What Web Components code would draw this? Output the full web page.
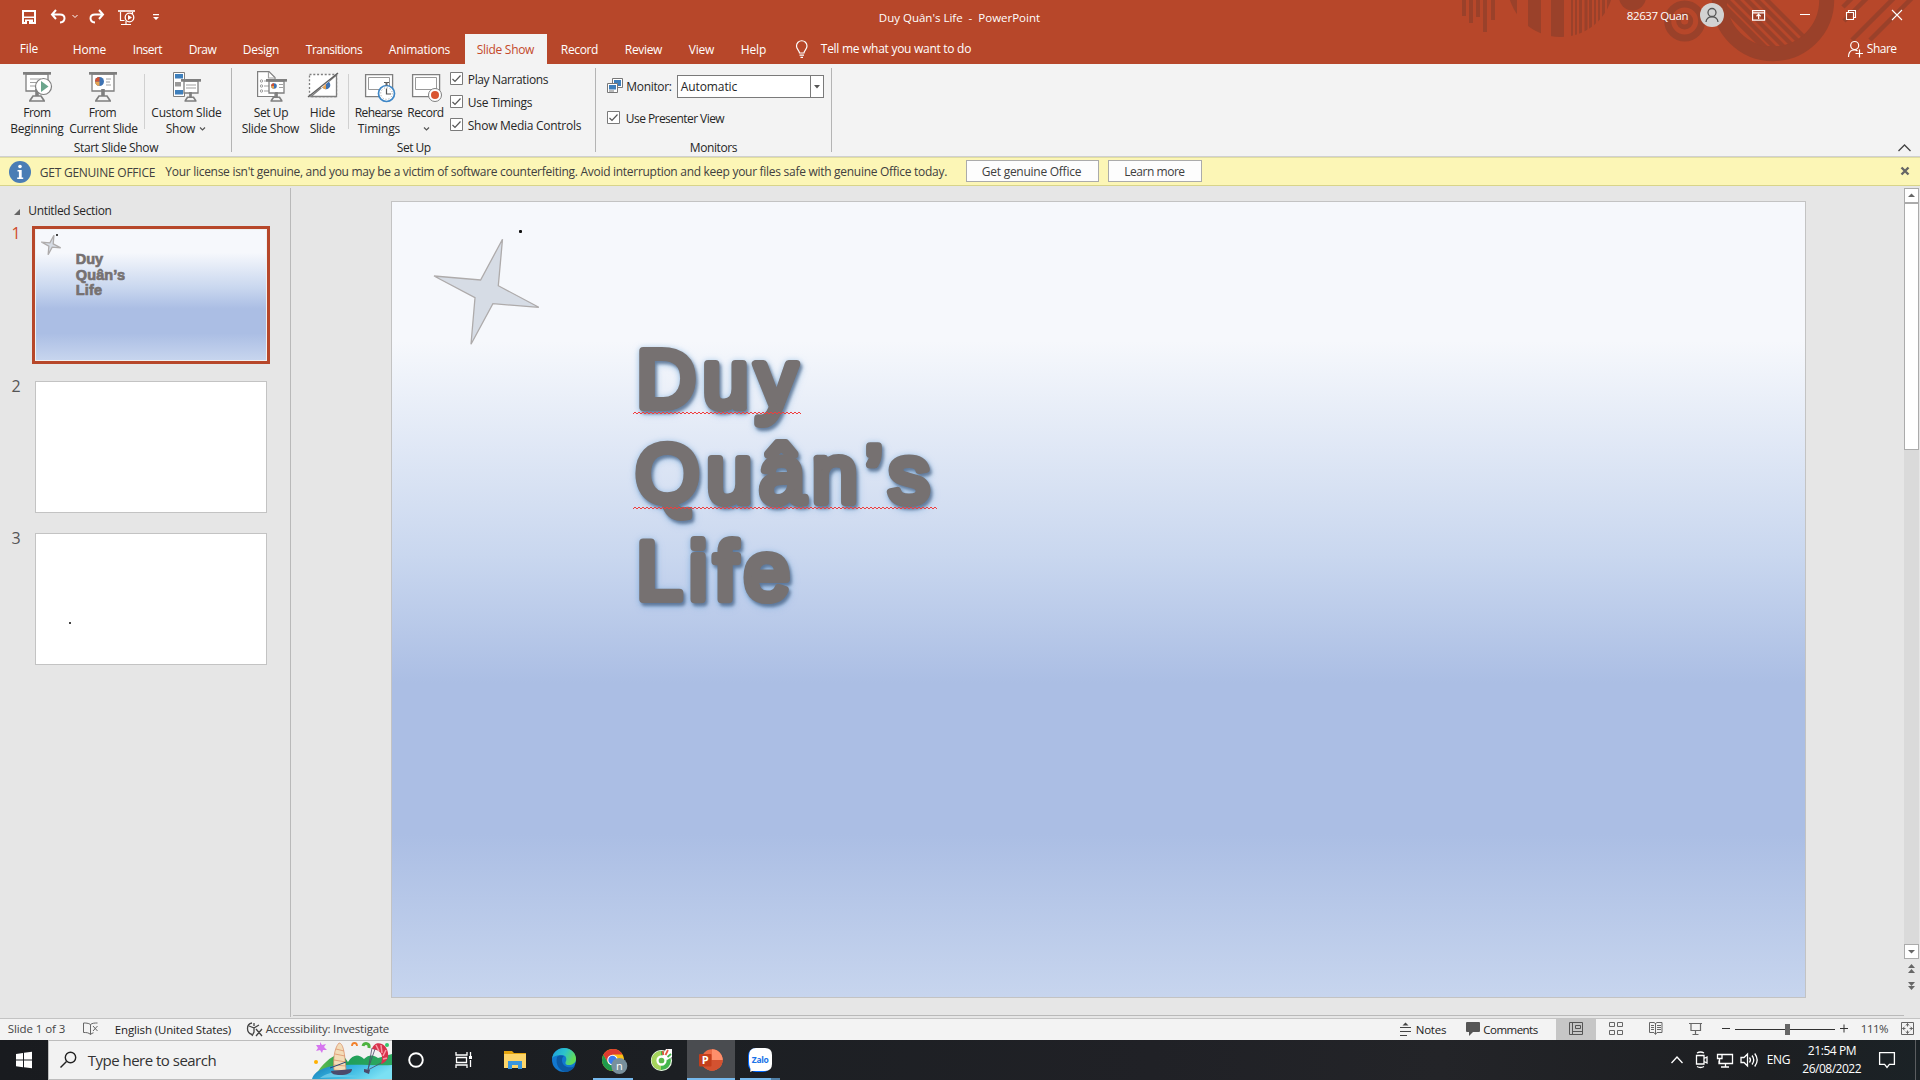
<!DOCTYPE html>
<html lang="en">
<head>
<meta charset="utf-8">
<title>Duy Quân's Life - PowerPoint</title>
<style>
html,body{margin:0;padding:0;overflow:hidden;background:#e6e6e6}
body{width:1920px;height:1080px;font-family:"Open Sans","Noto Sans",sans-serif;font-size:12px;color:#262626}
</style>
</head>
<body>
<ppt-app></ppt-app>
<script>
// Layout helpers: a row is a flex line whose children carry their gap from the previous child.
const icon = (x, y, w, h, body) => ({ x, y, w, html: `<svg width="${w}" height="${h}" viewBox="${x} ${y} ${w} ${h}">${body}</svg>` });
const text = (x, w, cy, str, size = 12, extra = '') => ({ x, y: cy - 10, w, html: `<ui-text w="${w}" style="font-size:${size}px;line-height:20px;${extra}">${str}</ui-text>` });
const row = (left, top, items) => {
  let end = left, out = '';
  for (const i of items) {
    out += `<div class="cell" style="margin:${i.y - top}px 0 0 ${i.x - end}px;width:${i.w}px">${i.html}</div>`;
    end = i.x + i.w;
  }
  return `<div class="row">${out}</div>`;
};
const BASE = `*{box-sizing:border-box}.row{display:flex;align-items:flex-start}.cell{flex:none;line-height:0}svg{display:block;overflow:visible}`;
const define = (name, css, html) => customElements.define(name, class extends HTMLElement {
  constructor() {
    super();
    this.attachShadow({ mode: 'open' }).innerHTML = `<style>${BASE}${css}</style>${html}`;
  }
});

customElements.define('ui-text', class extends HTMLElement {
  constructor() {
    super();
    this.attachShadow({ mode: 'open' }).innerHTML = `<style>:host{display:block;white-space:pre}span{display:inline-block;margin-left:-.2px}</style><span><slot></slot></span>`;
  }
  connectedCallback() {
    const w = +this.getAttribute('w'), s = this.shadowRoot.querySelector('span');
    if (!w) return;
    this.style.width = w + 'px';
    const n = [...this.textContent].length;
    s.style.letterSpacing = ((w + .3 - s.getBoundingClientRect().width) / Math.max(1, n)).toFixed(3) + 'px';
  }
});

/* ---------- title bar ---------- */
const D = '#9a412a';
const bars = [[1462,4,16],[1469,4,23],[1476,4,17],[1483,4,32],[1491,4,20]].map(b => `<rect x="${b[0]}" y="0" width="${b[1]}" height="${b[2]}"/>`).join('');
const stripes = [[1508,9],[1528,13],[1551,13],[1571,2],[1575,2],[1579,3],[1584.5,3],[1589,3],[1594,2],[1598,2],[1602,3],[1607,4]].map(b => `<rect x="${b[0]}" y="0" width="${b[1]}" height="40"/>`).join('');
const diag = [0,1,2,3,4,5].map(i => `<path d="M${1703 + i * 10} -14l80 80" stroke-width="${i < 1 ? 6 : 4.2}"/>`).join('');
const decor = `<svg class="decor" width="480" height="64" viewBox="1440 0 480 64">
<defs><clipPath id="a"><circle cx="1560.5" cy="-16" r="53"/></clipPath><clipPath id="b"><circle cx="1773" cy="0" r="47"/></clipPath></defs>
<g fill="${D}">${bars}<g clip-path="url(#a)">${stripes}</g><circle cx="1632.5" cy="-3" r="13.5"/><circle cx="1684.7" cy="21" r="8.5"/></g>
<g fill="none" stroke="${D}"><circle cx="1684.7" cy="21" r="17" stroke-width="7"/><circle cx="1773" cy="0" r="53.7" stroke-width="15"/>
<g clip-path="url(#b)">${diag}</g><path stroke-width="4.5" d="M1843 7l9-9M1844 21l24-24M1852 40l43-43M1870 40l43-43"/></g><circle cx="1684.7" cy="21" r="3.6" fill="#b7472a"/></svg>`;

define('app-titlebar', `:host{display:block;position:relative;height:34px;color:#fff}.decor{position:absolute;right:0;top:0}.row{position:relative}`,
decor + row(0, 0, [
  icon(22, 10, 14, 14, `<path fill="none" stroke="#fff" stroke-width="2" d="M23 11h12v12H23z"/><path fill="#fff" d="M23 16.5h12v1.5H23zM25 19.5h8V24h-8z"/><path fill="#b7472a" d="M27 21h2v3h-2z"/>`),
  icon(51, 9, 15, 15, `<path fill="none" stroke="#fff" stroke-width="2" d="M56 10l-4 4.500 4 4.500M52.500 14.500h7.500c6 0 6 7.500 0 8"/>`),
  icon(72, 14, 6, 4, `<path fill="none" stroke="#fff" d="M72.500 15l2.500 2.500L77.500 15"/>`),
  icon(89, 9, 15, 15, `<path fill="none" stroke="#fff" stroke-width="2" d="M99 10l4 4.500-4 4.500M102.500 14.500H95c-6 0-6 7.500 0 8"/>`),
  icon(118, 10, 17, 15, `<g fill="none" stroke="#fff"><path stroke-width="1.600" d="M118 11h17"/><path d="M120.500 12v8.500h4M132.500 12v2M126 21v3M121 24.500h10" stroke-width="1.200"/><circle cx="129.500" cy="17.500" r="4.300" stroke-width="1.300"/></g><path fill="#fff" d="M128 15l4 2.500-4 2.500z"/>`),
  icon(152, 14, 7, 7, `<path fill="#fff" d="M153 14h6v1.300h-6zM153 17h6l-3 3z"/>`),
  text(879, 161, 18, "Duy Quân's Life  -  PowerPoint", 11.5),
  text(1627, 61, 16, '82637 Quan', 11.5),
  icon(1700, 3, 24, 24, `<circle cx="1712" cy="15" r="12" fill="#d2d2d2"/><g fill="none" stroke="#555" stroke-width="1.300"><circle cx="1712" cy="12.500" r="4"/><path d="M1706 22c.5-7 11.500-7 12 0"/></g>`),
  icon(1752, 9, 13, 12, `<path fill="none" stroke="#fff" stroke-width="1.200" d="M1752.600 10.600h12v9.500h-12zM1752.600 12.800h12M1758.600 19v-4.500M1756.500 16.300l2.100-2 2.100 2"/>`),
  icon(1800, 9, 10, 12, `<path stroke="#fff" d="M1800 14.500h10"/>`),
  icon(1846, 9, 11, 12, `<path fill="none" stroke="#fff" stroke-width="1.100" d="M1846.500 12.500h7v7h-7zM1848.500 12v-1.500h7v7H1854"/>`),
  icon(1892, 9, 11, 12, `<path stroke="#fff" stroke-width="1.100" d="M1892 10l10 10M1902 10l-10 10"/>`)
]));

/* ---------- ribbon tabs ---------- */
define('ribbon-tabs', `:host{display:block;position:relative;height:30px;color:#fff}.active{background:#f3f3f3;height:30px;color:#c4492b;padding:6px 0 0 12px}`,
row(0, 34, [
  text(20, 18, 49, 'File'), text(73, 33, 50, 'Home'), text(133, 29, 50, 'Insert'), text(189, 27, 50, 'Draw'), text(243, 36, 50, 'Design'),
  text(306, 56, 50, 'Transitions'), text(389, 61, 50, 'Animations'),
  { x: 465, y: 34, w: 82, html: '<div class="active"><ui-text w="57" style="line-height:20px">Slide Show</ui-text></div>' },
  text(561, 37, 50, 'Record'), text(625, 37, 50, 'Review'), text(689, 25, 50, 'View'), text(741, 25, 50, 'Help'),
  icon(796, 41, 12, 17, `<path fill="none" stroke="#fff" stroke-width="1.200" d="M799.500 53c0-2.500-3-3.500-3-7a5 5 0 0 1 10.500 0c0 3.500-3 4.500-3 7zM799.500 55.200h4.500M800.500 57.300h2.500"/>`),
  text(821, 150, 49, 'Tell me what you want to do'),
  icon(1848, 41, 15, 16, `<g fill="none" stroke="#fff" stroke-width="1.200"><circle cx="1854.700" cy="45.500" r="4"/><path d="M1848.500 57c0-8 7-8 9-6M1859.500 49.500v8M1855.500 53.500h7.500"/></g>`),
  text(1867, 29.5, 49, 'Share')
]));

/* ---------- ribbon ---------- */
const G = '#7f7f7f';
const board = (x, y, w, h) => `<path fill="#fff" stroke="${G}" stroke-width="1.300" d="M${x + 3} ${y + 2}h${w - 6}v${h}h-${w - 6}z"/><path fill="${G}" d="M${x} ${y}h${w}v2.700H${x}z"/>`;
const stand = (cx, y, k = 1) => `<path fill="${G}" d="M${cx - 1.8 * k} ${y}h${3.6 * k}v${7 * k}h-${3.6 * k}z"/><path fill="none" stroke="${G}" stroke-width="1.700" d="M${cx - 7 * k} ${y + 11.5 * k}l${3 * k} -${4.5 * k}h${8 * k}l${3 * k} ${4.5 * k}M${cx - 8 * k} ${y + 12 * k}h${16 * k}"/>`;
const pie = (cx, cy, r) => `<circle cx="${cx}" cy="${cy}" r="${r}" fill="#3e73b3"/><path fill="#e8a34f" d="M${cx} ${cy}v${r}a${r} ${r} 0 0 1-${r}-${r}z"/><path fill="#d35230" d="M${cx} ${cy}h-${r}a${r} ${r} 0 0 1 ${r}-${r}z"/>`;
const L = (d) => `<path fill="none" stroke="#a0a0a0" stroke-width="1.200" d="${d}"/>`;
const chev = (x, y) => `<path fill="none" stroke="#555" stroke-width="1.200" d="M${x} ${y}l2.500 2.500 2.500-2.500"/>`;
const check = (x, y) => icon(x, y, 13, 13, `<path fill="#fff" stroke="#7a7a7a" d="M${x + .5} ${y + .5}h12v12h-12z"/><path fill="none" stroke="#555" stroke-width="1.200" d="M${x + 2.5} ${y + 7}l2.500 2.500 5.500-6"/>`);
const ICO = {
  begin: [23, `${board(23,72,28,17)}${L('M30 79h11M30 82.500h6M30 86h6')}${stand(37,89)}<circle cx="43.500" cy="86.500" r="8" fill="#fff" stroke="${G}" stroke-width="1.200"/><path fill="#6ba58c" d="M41 81l7.500 5.500L41 92z"/>`],
  current: [89, `${board(89,72,28,17)}${pie(99.5,81.5,4.5)}${L('M106 79h5M106 82h4M106 85h5')}${stand(103,89)}`],
  custom: [172, `<path fill="#fff" stroke="${G}" d="M173.500 72.500h11v24h-11z"/><path fill="#3e7fbc" d="M175 74h8v4.500h-8zM175 90h8v4.500h-8z"/><path fill="#999" d="M175 82h6v4.500h-6z"/>${board(181,79,20,12)}${L('M186 85h10M186 88h10')}${stand(190.5,92,.75)}`],
  setup: [257, `<path fill="#fff" stroke="${G}" stroke-width="1.200" d="M257.600 71.600h11.400l6 6V96.500h-17.400z"/>${L('M268.500 72v6h6M264 81h5M264 86h5M264 91h5')}<g fill="none" stroke="#999"><circle cx="261.500" cy="81" r="1.200"/><circle cx="261.500" cy="86" r="1.200"/><circle cx="261.500" cy="91" r="1.200"/></g>${board(266,79,21,12)}${pie(274,86,2.8)}${L('M279 84.500h4M279 87.500h4')}${stand(276.5,92,.75)}`],
  hide: [308, `<path fill="#fff" stroke="${G}" stroke-width="1.300" stroke-dasharray="2 1.800" d="M309.500 74.500h27v22h-27z"/><path fill="#fff" stroke="${G}" stroke-width="1.300" d="M311 96.500L336.500 75v21.500z"/>${pie(326,85,4.3)}<path fill="#fff" d="M319 79h7.500l3.500 1.500-9 8z"/><path stroke="#606060" stroke-width="1.500" d="M308 97l30-24"/>`],
  rehearse: [365, `<path fill="#fff" stroke="${G}" stroke-width="1.300" d="M365.600 74.600h27v22h-27z"/><path fill="none" stroke="#999" d="M368.500 77.500h21v12h-21z"/><circle cx="386.500" cy="93.500" r="8" fill="#fff" stroke="#3e86c6" stroke-width="1.700"/><circle cx="386.500" cy="93.500" r="5.800" fill="none" stroke="#888" stroke-dasharray=".8 2.200"/><path fill="none" stroke="#555" stroke-width="1.200" d="M386.500 88.500v5.500h4.500M384 82.500h5"/><path fill="#666" d="M385.500 82h2v3.500h-2z"/>`],
  record: [412, `<path fill="#fff" stroke="${G}" stroke-width="1.300" d="M412.600 74.600h27v22h-27z"/><path fill="none" stroke="#999" d="M415.500 77.500h21v12h-21z"/><circle cx="435" cy="95" r="6.500" fill="#fff" stroke="${G}"/><circle cx="435" cy="95" r="4" fill="#d9542f"/>`]
};
const big = (x, w, key, w1, l1, w2, l2, chevX) => ({ x, y: 70, w, html:
  row(x, 70, [icon(ICO[key][0], 70, 31, 33, ICO[key][1])]) +
  row(x, 103, [text(w1[0], w1[1], 113.4, l1)]) +
  `<div style="margin-top:-4px">` + row(x, 119, [...(l2 ? [text(w2[0], w2[1], 129, l2)] : []), ...(chevX ? [icon(chevX, 126, 6, 13, chev(chevX, 127.5))] : [])]) + `</div>` });
const sep = (x, y, h, c) => ({ x, y, w: 1, html: `<div style="height:${h}px;background:${c}"></div>` });
const checkline = (w, s) => `<div style="height:23px">${row(450, 72, [check(450, 72), text(468, w, 80, s)])}</div>`;

define('app-ribbon', `:host{display:block;height:93px;background:#f3f3f3;border-bottom:1px solid #d0d0d0}.main{height:76px}.foot{height:16px}.combo{height:23px;display:flex;border:1px solid #7a7a7a;background:#fff}.combo .v{flex:1;padding:1px 0 0 3px}.combo .a{width:13px;border-left:1px solid #7a7a7a;padding:9px 0 0 3px}`,
`<div class="main">` + row(0, 64, [
  big(10, 54, 'begin', [23.5, 27], 'From', [10.5, 53], 'Beginning'),
  big(69, 70, 'current', [89, 27], 'From', [69.5, 68], 'Current Slide'),
  sep(144, 74, 55, '#d0d0d0'),
  big(151, 71, 'custom', [151.5, 70], 'Custom Slide', [166, 29], 'Show', 199.5),
  sep(231, 68, 84, '#b4b4b4'),
  big(241, 59, 'setup', [254, 34], 'Set Up', [242, 57], 'Slide Show'),
  big(308, 31, 'hide', [310, 25], 'Hide', [310, 25], 'Slide'),
  sep(348, 74, 55, '#d0d0d0'),
  big(355, 48, 'rehearse', [355, 47], 'Rehearse', [358, 42], 'Timings'),
  big(407, 38, 'record', [407.5, 36], 'Record', null, '', 423.5),
  { x: 450, y: 72, w: 135, html: checkline(80, 'Play Narrations') + checkline(64, 'Use Timings') + checkline(113, 'Show Media Controls') },
  sep(595, 68, 84, '#b4b4b4'),
  { x: 607, y: 75, w: 217, html: row(607, 75, [
      icon(607, 78, 16, 15, `<path fill="#fff" stroke="#777" d="M612.500 78.500h10v9h-10z"/><path fill="#3e7fbc" d="M614 80h7v6h-7z"/><path fill="#fff" stroke="#777" d="M607.500 83.500h10v9h-10z"/><path fill="#3e7fbc" d="M609 85h7v4.500h-7z"/><path fill="#777" d="M609 90.500h5v1h-5z"/>`),
      text(626.5, 45, 87, 'Monitor:'),
      { x: 677, y: 75, w: 147, html: `<div class="combo"><div class="v"><ui-text w="56" style="line-height:20px">Automatic</ui-text></div><div class="a"><svg width="6" height="4"><path fill="#555" d="M0 0h6L3 3.500z"/></svg></div></div>` }]) +
    `<div>` + row(607, 98, [check(607, 111), text(626, 98, 119, 'Use Presenter View')]) + `</div>` },
  sep(831, 68, 84, '#b4b4b4')
]) + `</div><div class="foot">` + row(0, 140, [
  text(74, 84, 148, 'Start Slide Show'), text(397, 33.5, 148, 'Set Up'), text(690, 47, 148, 'Monitors'),
  icon(1898, 144, 13, 8, `<path fill="none" stroke="#444" stroke-width="1.300" d="M1898.500 151l6-6 6 6"/>`)
]) + `</div>`);

/* ---------- message bar ---------- */
define('message-bar', `:host{display:block;height:29px;background:#fcf6b6;border-top:1px solid #e0dda0;border-bottom:1px solid #d8d48a;color:#404040}.btn{height:22px;background:#fdfdfd;border:1px solid #ababab}`,
row(0, 158, [
  icon(9, 161, 22, 22, `<circle cx="20" cy="172" r="11" fill="#4a7db5"/><circle cx="20" cy="166.500" r="1.800" fill="#fff"/><path fill="#fff" d="M17.500 170h4.200v7.500h1.500v1.500h-6v-1.500h1.700v-6h-1.400z"/>`),
  text(40, 115, 173, 'GET GENUINE OFFICE', 12),
  text(165.5, 781.5, 172, "Your license isn't genuine, and you may be a victim of software counterfeiting. Avoid interruption and keep your files safe with genuine Office today."),
  { x: 966, y: 160, w: 133, html: `<div class="btn">${row(967, 161, [text(982, 99, 172, 'Get genuine Office')])}</div>` },
  { x: 1108, y: 160, w: 94, html: `<div class="btn">${row(1109, 161, [text(1124.5, 60, 172, 'Learn more')])}</div>` },
  icon(1901, 167, 9, 9, `<path stroke="#666" stroke-width="2.400" d="M1901.500 167.500l7 7M1908.500 167.500l-7 7"/>`)
]));

/* ---------- slides ---------- */
define('slide-star', `:host{display:block}svg{width:100%;height:100%}`,
`<svg viewBox="433 238 107 108"><path fill="#d6dce5" stroke="#aeabab" stroke-width="1.300" vector-effect="non-scaling-stroke" d="M502.500 239.300L498.300 285.700 538.800 307.300 492.900 303.700 471 344.300 475 297.700 434 276 480.600 280z"/></svg>`);

const GRAD = 'linear-gradient(#f6f8fc 0,#f6f8fc 17.500%,#c9d7ef 44.500%,#abbee4 60.500%,#abbee4 79.500%,#c7d5ee 100%)';
define('slide-thumb', `:host{display:flex;height:0}.n{width:20px;margin:-5px 0 0 11.500px;font-size:16px;line-height:20px;color:#555}
.f{width:232px;height:132px;border:1px solid #c3c3c3;background:#fff;margin-left:3.500px;position:relative}
:host([active]) .n{color:#d0492b;margin-top:-3px}:host([active]) .f{width:238px;height:138px;margin-left:.5px;border:3px solid #b7472a;background:#f0f0f0;padding:1px}
.s{display:block;height:100%}:host([active]) .s{background:${GRAD}}`,
`<div class="n"><slot name="n"></slot></div><div class="f"><div class="s"><slot></slot></div></div>`);

define('slide-nav', `:host{display:block;flex:none;box-sizing:border-box;width:291px;height:829px;border-right:1px solid #b9b9b9;margin-top:2px}
.h{height:38px}slide-star{position:absolute;left:6px;top:5.500px;width:20px;height:20px}.dot{position:absolute;width:2px;height:2px;background:#444}
.t{position:absolute;left:41px;top:23px;font-weight:800;font-family:"Liberation Sans",Arial,sans-serif;color:#767171;-webkit-text-stroke:.7px #767171}`,
`<div class="h">${row(0, 188, [icon(14, 208, 7, 7, `<path fill="#666" d="M20 209v6h-6z"/>`), text(28.5, 83, 211, 'Untitled Section')])}</div>
<slide-thumb active style="height:155px"><span slot="n">1</span><slide-star></slide-star><div class="dot" style="left:21px;top:5px"></div>
<div class="t"><ui-text w="27" style="font-size:14.500px;line-height:15.600px">Duy</ui-text><ui-text w="49" style="font-size:14.500px;line-height:15.600px">Quân’s</ui-text><ui-text w="26" style="font-size:14.500px;line-height:15.600px">Life</ui-text></div></slide-thumb>
<slide-thumb style="height:152px"><span slot="n">2</span></slide-thumb>
<slide-thumb style="height:152px"><span slot="n">3</span><div class="dot" style="left:33px;top:88px"></div></slide-thumb>`);

const wave = (x, y, w) => { let d = `M${x} ${y + 1}`; for (let i = 0; i < w; i += 4) d += 'l2-2 2 2'; return `<path fill="none" stroke="#f03c3c" stroke-width="1" d="${d}"/>`; };
const word = (x, y, w, s) => `<text x="${x}" y="${y}" textLength="${w}" lengthAdjust="spacing">${s}</text>`;
define('slide-canvas', `:host{display:block;box-sizing:border-box;position:relative;width:1415px;height:797px;border:1px solid #c3c3c3;background:${GRAD}}
slide-star{position:absolute;left:41px;top:36px;width:107px;height:108px}.dot{position:absolute;left:127px;top:28px;width:3px;height:3px;background:#111;border-radius:1px}
.w{position:absolute;left:0;top:0}
.t{font:400 82px "Liberation Sans",Arial,sans-serif;fill:#767171;stroke:#767171;stroke-width:8px;stroke-linejoin:round;stroke-linecap:round;filter:drop-shadow(2px 3px 1.500px rgba(60,80,110,.6)) drop-shadow(0 1px 3px rgba(91,155,213,.6))}`,
`<slide-star></slide-star><div class="dot"></div>
<svg class="w" width="600" height="400" viewBox="392 202 600 400"><g class="t">${word(636.5, 406.5, 160, 'Duy')}${word(635.5, 502, 294, 'Quân’s')}${word(636.5, 598.5, 153, 'Life')}</g>${wave(633, 413, 168)}${wave(633, 508, 304)}</svg>`);

define('slide-scroll', `:host{display:flex;flex:none;flex-direction:column;width:15px;margin-top:2px}.b{height:15px;border:1px solid #ababab;background:#fff}.k{height:247px;border:1px solid #ababab;background:#fff}.g{height:494px;background:#dadada}.n{padding-top:5px}`,
`<div class="b"><svg width="13" height="13"><path fill="#666" d="M3 8h7L6.500 4.500z"/></svg></div><div class="k"></div><div class="g"></div>
<div class="b"><svg width="13" height="13"><path fill="#666" d="M3 5h7L6.500 8.500z"/></svg></div>
<div class="n"><svg width="15" height="28"><path fill="#666" d="M4 4h7L7.500 0zM4 9h7L7.500 5zM4 18h7l-3.500 4zM4 22h7l-3.500 4z"/></svg></div>`);

define('slide-stage', `:host{display:flex;flex:1;height:832px}.m{flex:none;width:1611px;height:830px;border-bottom:1px solid #b9b9b9;margin-left:2px;padding:15px 0 0 98px}`,
`<div class="m"><slide-canvas></slide-canvas></div><slide-scroll></slide-scroll>`);

/* ---------- status bar ---------- */
const S = '#666';
define('status-bar', `:host{display:block;box-sizing:border-box;height:22px;background:#f3f3f3;border-top:1px solid #c3c3c3;color:#444}.on{background:#c6c6c6;height:21px;padding:3px 0 0 13px}`,
row(0, 1019, [
  text(8, 57, 1029, 'Slide 1 of 3', 11.5),
  icon(83, 1022, 16, 13, `<path fill="none" stroke="${S}" d="M90.500 1024.500c-2-1.500-5-1.500-7-1.500v9.500c3 0 5 0 7 2 1-1 2-1.500 3-1.700M90.500 1024.500v10M90.500 1024.500c2-1.500 4-1.500 7-1.500M93 1026l4.500 5M97.500 1026l-4.500 5"/>`),
  text(115, 116, 1030, 'English (United States)', 11.5, 'color:#222'),
  icon(246, 1022, 17, 15, `<path fill="none" stroke="#444" stroke-width="1.300" d="M252 1023c-6 1-6 10 0 11.500M249 1026l5 2v4l-2 4M254 1028l5-3M254 1023v3M256 1029l6 7M262 1029l-6 7"/>`),
  text(266, 123, 1029, 'Accessibility: Investigate', 11.5),
  icon(1400, 1022, 12, 14, `<path stroke="#444" stroke-width="1.200" d="M1400 1027.500h11M1400 1031.500h11M1400 1035.500h7"/><path fill="#444" d="M1402.500 1025.500h6l-3-3z"/>`),
  text(1416, 30, 1030, 'Notes', 11.5, 'color:#222'),
  icon(1466, 1022, 14, 14, `<path fill="#555" d="M1467 1022h12q1 0 1 1v8q0 1-1 1h-6l-4 4v-4h-2q-1 0-1-1v-8q0-1 1-1z"/>`),
  text(1483.5, 54, 1030, 'Comments', 11.5, 'color:#222'),
  { x: 1556, y: 1019, w: 40, html: `<div class="on"><svg width="14" height="13" viewBox="0 0 14 13"><path fill="none" stroke="#555" d="M.5.500h13v12H.5zM3.500.500v12M6.500 3.500h5v3h-5zM3.500 9.500h10"/></svg></div>` },
  icon(1609, 1022, 14, 14, `<path fill="none" stroke="${S}" d="M1609.500 1022.500h5v4h-5zM1617.500 1022.500h5v4h-5zM1609.500 1030.500h5v4h-5zM1617.500 1030.500h5v4h-5z"/>`),
  icon(1649, 1022, 14, 14, `<path fill="none" stroke="${S}" d="M1649.500 1022.500h4.500l1.500 1 1.500-1h5v10h-5l-1.500 2-1.500-2h-4.500zM1655.500 1023v11M1651 1025.500h3M1651 1027.500h3M1651 1029.500h3M1657 1025.500h4M1657 1027.500h4M1657 1029.500h4"/>`),
  icon(1689, 1022, 13, 14, `<path fill="none" stroke="${S}" stroke-width="1.200" d="M1689 1023.500h13M1691 1024v6.500h9.500V1024M1695.500 1031v4M1692.500 1034.500h6"/>`),
  icon(1722, 1023, 8, 12, `<path stroke="#333" d="M1722 1028.500h8"/>`),
  icon(1735, 1023, 100, 12, `<path stroke="#333" d="M1735 1029.500h100"/><path fill="#666" d="M1785 1024h5v11h-5z"/>`),
  icon(1840, 1023, 9, 12, `<path stroke="#333" d="M1840 1028.500h8M1844 1024.500v8"/>`),
  text(1861, 27, 1029, '111%', 11.5),
  icon(1901, 1022, 14, 14, `<path fill="none" stroke="${S}" d="M1901.500 1022.500h12v12h-12z"/><path fill="none" stroke="${S}" d="M1907.500 1023.500v3M1907.500 1030.500v3M1902.500 1028.500h3M1909.500 1028.500h3M1906 1025.500l1.500-2 1.500 2M1906 1031.500l1.500 2 1.500-2M1904.500 1027l-2 1.500 2 1.500M1910.500 1027l2 1.500-2 1.500"/>`)
]));

/* ---------- task bar ---------- */
const W = 'fill="none" stroke="#fff" stroke-width="1.300"';
const art = `<svg width="80" height="38" viewBox="312 1041 80 38"><defs><linearGradient id="w" x2="1" y2=".3"><stop stop-color="#1679b4"/><stop offset=".5" stop-color="#35b5e0"/><stop offset="1" stop-color="#7be0f3"/></linearGradient><linearGradient id="h"><stop stop-color="#6cc04a"/><stop offset=".35" stop-color="#1e9e57"/><stop offset="1" stop-color="#2fa860"/></linearGradient><clipPath id="c"><path d="M312 1041h80v38h-80z"/></clipPath></defs><g clip-path="url(#c)">
<path fill="url(#h)" d="M316 1074c6-9 14-18 24-20 3 0 8 8 8 8 5-8 11-8 16-3 5-5 10-4 14-1l14-4v12l-40 6z"/>
<path fill="url(#w)" d="M312 1079c3-10 18-14 34-14 12-1 34 1 46 0v14z"/><path fill="#8edcf2" opacity=".6" d="M320 1078c8-6 18-7 30-5l-12 2 20 1z"/>
<path fill="#f3dcb8" stroke="#d88a62" stroke-width=".7" d="M334 1070c-1-9 0-22 5-27 5 0 6 14 7 28z"/><path fill="none" stroke="#d88a62" stroke-width=".7" d="M336 1049l8 2M335 1054l10 2M334 1060l12 2M334 1065l12 1"/>
<path fill="none" stroke="#274a78" d="M330 1068l16-6"/><path fill="#4b4a6b" d="M331 1071l21-2c0 4-5 6-12 6-5 0-9-1-9-4z"/>
<path fill="#d8324c" d="M372 1049c3-11 18-5 16 8-1 4-5 7-7 7 3-9 0-14-9-15z"/><path stroke="#f79aa6" stroke-width="1.500" d="M376 1045l3 6M381 1045l1 8M386 1050l-3 6M387 1058l-4 1"/>
<path fill="none" stroke="#4b4a6b" stroke-width=".8" d="M372 1048l-4 22M375 1049l-7 20M381 1063l-13 7"/><path fill="#4b4a6b" d="M364 1069l6 1-1 4-5-2z"/>
<path fill="#d676ef" d="M320 1042l2 3 4-1-2 3 3 3-4 0-1 3-2-3-4 1 2-3-2-3 4 0z"/><circle cx="316" cy="1062" r="2" fill="#ffb000"/><circle cx="387" cy="1045" r="2" fill="#35c86b"/>
<path fill="none" stroke="#f2812c" stroke-width="1.800" d="M352 1046c0-4 5-4 5 0"/><path fill="none" stroke="#4db33f" stroke-width="3" d="M363 1046c1-4 7-3 6 2"/></g></svg>`;
define('task-search', `:host{display:flex;box-sizing:border-box;width:344px;height:40px;background:#f2f2f2;border:1px solid #bdbdbd;border-width:1px 0 1px 1px;color:#333}.a{margin-left:auto}`,
row(49, 1041, [icon(60, 1051, 17, 17, `<g fill="none" stroke="#222" stroke-width="1.400"><circle cx="70.500" cy="1057.500" r="5.200"/><path d="M66.500 1061.500l-6 6"/></g>`), text(88, 128, 1060, 'Type here to search', 15)]) + `<div class="a">${art}</div>`);

const under = (w, c = '#76b9ed') => `<div style="height:2px;width:${w}px;background:${c}"></div>`;
define('task-bar', `:host{display:block;height:40px;background:linear-gradient(90deg,#191b1f 0,#1c1f23 35%,#202126 60%,#232428 75%,#1d1f22 92%,#1b2226);color:#fff}.ppt{display:flex;flex-direction:column;justify-content:space-between;height:40px;background:#4a4c50;padding-top:9px}.ppt svg{margin-left:12px}`,
row(0, 1040, [
  icon(16, 1052, 16, 16, `<path fill="#fff" d="M16 1054l7-1v6.500h-7zM24 1052.800l8-1v7.700h-8zM16 1060.500h7v6.700l-7-1zM24 1060.500h8v7.700l-8-1z"/>`),
  { x: 48, y: 1040, w: 344, html: '<task-search></task-search>' },
  icon(408, 1052, 16, 16, `<circle cx="416" cy="1060" r="6.800" fill="none" stroke="#fff" stroke-width="1.900"/>`),
  icon(455, 1051, 17, 17, `<path ${W} d="M456 1052v3h11v-3M456 1068v-3h11v3M456.500 1057.500h10v5h-10zM470.500 1052v4M470.500 1060v7"/><path fill="#fff" d="M469 1056h3v3h-3z"/>`),
  icon(504, 1051, 22, 18, `<path fill="#e5a50f" d="M504 1051h8l2 2h12v4h-22z"/><path fill="#fdd569" d="M504 1054h22v14h-22z"/><path fill="#3a96dd" d="M508 1061h14v8h-4v-4h-6v4h-4z"/>`),
  icon(552, 1048, 24, 24, `<defs><linearGradient id="e" x1="0" y1="0" x2="1" y2=".4"><stop stop-color="#1a9bde"/><stop offset=".55" stop-color="#2cc3cb"/><stop offset="1" stop-color="#62dc58"/></linearGradient></defs><circle cx="564" cy="1060" r="12" fill="#1278cf"/><path fill="url(#e)" d="M552 1059c1-7 6-11 12-11 8 0 12 6 12 11 0 4-4 6-7 6-4 0-4-2-3-4 1-2 0-6-4-6-5 0-9 1-10 4z"/><path fill="#0c59a4" d="M557 1057c-2 8 3 15 10 15 4-1 7-4 8-6-5 3-13 1-13-6 0-3 2-4 2-4-3-1-6-.5-7 1z"/>`),
  { x: 593, y: 1048, w: 40, html: `<svg width="40" height="30" viewBox="593 1048 40 30"><circle cx="613" cy="1060" r="11" fill="#fbc116"/><path fill="#de3b30" d="M603.300 1054.800a11 11 0 0 1 19.300-.3H613l-5 8.500z"/><path fill="#1f9a4c" d="M603.300 1054.800l5.200 8.700 4.500 2 3 0-4 5.500a11 11 0 0 1-8.700-16.200z"/><circle cx="612.500" cy="1060" r="5.300" fill="#fff"/><circle cx="612.500" cy="1060" r="4.200" fill="#3b7ded"/><circle cx="619.300" cy="1066" r="8" fill="#78909c"/><text x="619.300" y="1070" text-anchor="middle" font-size="11" fill="#fff">n</text></svg>${under(40)}` },
  icon(651, 1049, 22, 22, `<circle cx="661.500" cy="1060.500" r="10" fill="#43b64b" stroke="#eaf6e4" stroke-width="1.200"/><path fill="#a6d55c" d="M661 1051a9.500 9.500 0 0 0 0 19z"/><path fill="#fff" d="M661 1058l5-9h6v8l-5 3z"/><circle cx="661.500" cy="1060.500" r="4" fill="#59b948" stroke="#fff" stroke-width="2.300"/><path stroke="#e4553d" stroke-width="1.700" d="M662.500 1051l1 4M668 1050l-2.500 5"/><path stroke="#43b64b" stroke-width="1.700" d="M671 1054l-3.500 3"/>`),
  { x: 687, y: 1040, w: 48, html: `<div class="ppt"><svg width="24" height="22" viewBox="699 1049 24 22"><circle cx="712" cy="1060" r="10.700" fill="#ed6c47"/><path fill="#ff8f6b" d="M712 1049.300a10.700 10.700 0 0 1 10.700 10.700H712z"/><path fill="#d35230" d="M701.300 1060h21.400a10.700 10.700 0 0 1-21.400 0z"/><rect x="699" y="1054" width="12.500" height="12.500" rx="1" fill="#c43e1c"/><text x="705.200" y="1064.200" text-anchor="middle" font-size="11" font-weight="700" fill="#fff">P</text></svg>${under(48)}</div>` },
  { x: 740, y: 1048, w: 40, html: `<svg width="40" height="30" viewBox="740 1048 40 30"><rect x="748" y="1048" width="23" height="24" rx="8" fill="#0068ff"/><path fill="#fff" d="M756 1048h9q7 0 7 7v9q0 7-7 7h-9q-3 0-4 0-1 1-2 .5 1-2 0-4-1-2-1-6v-6q0-7.500 7-7.500z"/><text x="760.300" y="1062.500" text-anchor="middle" font-size="8.500" textLength="17" font-weight="700" fill="#1a73e8">Zalo</text></svg><div class="row">${under(31)}${under(9, '#4f7fa6')}</div>` },
  icon(1671, 1055, 12, 9, `<path ${W} d="M1671.500 1063l5.500-6 5.500 6"/>`),
  icon(1696, 1051, 12, 18, `<path ${W} d="M1696.500 1055.500h7.500v8.500h-7.500zM1704 1058.500l3-1.500v6l-3-1.500M1697 1053q3.500-2 7 0M1697 1066.500q3.500 2 7 0"/>`),
  icon(1717, 1052, 16, 16, `<path ${W} d="M1722 1054.500h10.500v9H1719v-3M1725.500 1064v3M1721 1067h8M1717.500 1054.500h4.500v4h-4.500zM1719.500 1059v4"/>`),
  icon(1740, 1052, 18, 16, `<path ${W} d="M1741 1057.500h3l3.500-3.500v12l-3.500-3.500h-3zM1749.500 1057.500q2 2.500 0 5M1752 1055.500q3.500 4.500 0 9M1754.700 1053.500q5 6.500 0 13"/>`),
  text(1767, 23, 1060, 'ENG', 12),
  { x: 1802, y: 1041, w: 60, html: row(1802, 1041, [text(1808, 48, 1051, '21:54 PM', 12)]) + `<div style="margin-top:-2px">${row(1802, 1059, [text(1802.5, 58.5, 1069, '26/08/2022', 12)])}</div>` },
  icon(1879, 1052, 16, 17, `<path ${W} d="M1879.600 1052.600h14.800v11.800h-5l-2.400 3-2.400-3h-5z"/>`),
  sep(1915, 1040, 40, '#5b5d60')
]));

define('ppt-app', `:host{display:flex;flex-direction:column;width:1920px;height:1080px;background:#e6e6e6}.top{background:#b7472a}.work{display:flex;height:832px;flex:none}app-ribbon,message-bar{box-sizing:border-box;flex:none}`,
`<div class="top"><app-titlebar></app-titlebar><ribbon-tabs></ribbon-tabs></div><app-ribbon></app-ribbon><message-bar></message-bar>
<div class="work"><slide-nav></slide-nav><slide-stage></slide-stage></div><status-bar></status-bar><task-bar></task-bar>`);
</script>
</body>
</html>
